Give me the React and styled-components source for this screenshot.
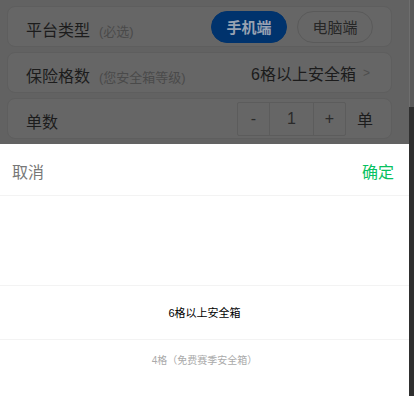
import React from 'react'
import styled, { createGlobalStyle } from 'styled-components'

const GlobalStyle = createGlobalStyle`
    html, body {
        margin:0;
        padding:0;
        height:100%;
        overflow:hidden;
    }
    body {
        font-family:"Liberation Sans", "Noto Sans CJK SC", sans-serif;
    }
    #root { height:100%; }
`

const Screen = styled.div`
    display:flex;
    width:414px;
    height:396px;
`

const Viewport = styled.div`
    flex:1;
    display:flex;
    flex-direction:column;
    min-width:0;
`

const ScrollTrack = styled.div`
    width:5px;
    background:#2f2f2f;
    display:flex;
    flex-direction:column;
`

const ScrollThumb = styled.div`
    height:107px;
    background:#5a5a5a;
    border-left:1px solid #6e6e6e;
`

const DimmedPage = styled.div`
    height:144px;
    box-sizing:border-box;
    background:#626262;
    padding:6px 17px 0 7px;
    display:flex;
    flex-direction:column;
    gap:5px;
    overflow:hidden;
`

const Card = styled.div`
    height:41px;
    flex-shrink:0;
    box-sizing:border-box;
    background:#666666;
    border:1px solid #5e5e5e;
    border-radius:8px;
    padding:0 18px;
    display:flex;
    align-items:center;
    justify-content:space-between;
`

const Label = styled.div`
    display:flex;
    align-items:baseline;
    gap:9px;
    font-size:16px;
    color:#1c1c1c;
    padding-top:4px;
`

const Hint = styled.span`
    font-size:13px;
    color:#4a4a4a;
`

const Pills = styled.div`
    display:flex;
    gap:10px;
`

const Pill = styled.div`
    width:76px;
    height:32px;
    box-sizing:border-box;
    border-radius:16px;
    display:flex;
    align-items:center;
    justify-content:center;
    font-size:15px;
    font-weight:${p => p.active ? 700 : 400};
    background:${p => p.active ? '#00336d' : '#666666'};
    color:${p => p.active ? '#98a2b2' : '#262626'};
    border:1px solid ${p => p.active ? '#00336d' : '#5a5a5a'};
`

const Value = styled.div`
    display:flex;
    align-items:center;
    gap:7px;
    font-size:16px;
    color:#1c1c1c;
    padding-right:3px;
`

const Arrow = styled.span`
    font-size:12px;
    color:#4d4d4d;
`

const StepperRow = styled.div`
    display:flex;
    align-items:center;
    gap:11px;
    font-size:16px;
    color:#1c1c1c;
`

const Stepper = styled.div`
    display:flex;
    height:32px;
    border:1px solid #5c5c5c;
    border-radius:2px;
`

const StepCell = styled.div`
    width:${p => p.wide ? '43px' : '31px'};
    display:flex;
    align-items:center;
    justify-content:center;
    font-size:16px;
    color:#2a2a2a;
    border-left:${p => p.first ? 'none' : '1px solid #5c5c5c'};
`

const Sheet = styled.div`
    flex:1;
    background:#ffffff;
    display:flex;
    flex-direction:column;
`

const SheetHeader = styled.div`
    height:52px;
    box-sizing:border-box;
    padding:3px 15px 0 12px;
    display:flex;
    align-items:center;
    justify-content:space-between;
    border-bottom:1px solid #f3f3f3;
    font-size:16px;
`

const HeaderAction = styled.span`
    color:${p => p.confirm ? '#07c160' : '#777777'};
`

const PickerBody = styled.div`
    padding-top:89px;
    display:flex;
    flex-direction:column;
`

const Option = styled.div`
    display:flex;
    align-items:center;
    justify-content:center;
    height:${p => p.selected ? '52px' : '38px'};
    font-size:${p => p.selected ? '11px' : '10px'};
    color:${p => p.selected ? '#000000' : '#aaaaaa'};
    border-top:${p => p.selected ? '1px solid #f3f3f3' : 'none'};
    border-bottom:${p => p.selected ? '1px solid #f3f3f3' : 'none'};
    padding-bottom:${p => p.selected ? '1px' : '0'};
`

const options = ['6格以上安全箱', '4格（免费赛季安全箱）']

export default function App(){
    return(
        <Screen>
            <GlobalStyle />
            <Viewport>
                <DimmedPage>
                    <Card>
                        <Label>平台类型<Hint>(必选)</Hint></Label>
                        <Pills>
                            <Pill active>手机端</Pill>
                            <Pill>电脑端</Pill>
                        </Pills>
                    </Card>
                    <Card>
                        <Label>保险格数<Hint>(您安全箱等级)</Hint></Label>
                        <Value>6格以上安全箱<Arrow>&gt;</Arrow></Value>
                    </Card>
                    <Card>
                        <Label>单数</Label>
                        <StepperRow>
                            <Stepper>
                                <StepCell first>-</StepCell>
                                <StepCell wide>1</StepCell>
                                <StepCell>+</StepCell>
                            </Stepper>
                            单
                        </StepperRow>
                    </Card>
                </DimmedPage>
                <Sheet>
                    <SheetHeader>
                        <HeaderAction>取消</HeaderAction>
                        <HeaderAction confirm>确定</HeaderAction>
                    </SheetHeader>
                    <PickerBody>
                        {options.map((o, i) => (
                            <Option key={o} selected={i === 0}>{o}</Option>
                        ))}
                    </PickerBody>
                </Sheet>
            </Viewport>
            <ScrollTrack>
                <ScrollThumb />
            </ScrollTrack>
        </Screen>
    )
}
